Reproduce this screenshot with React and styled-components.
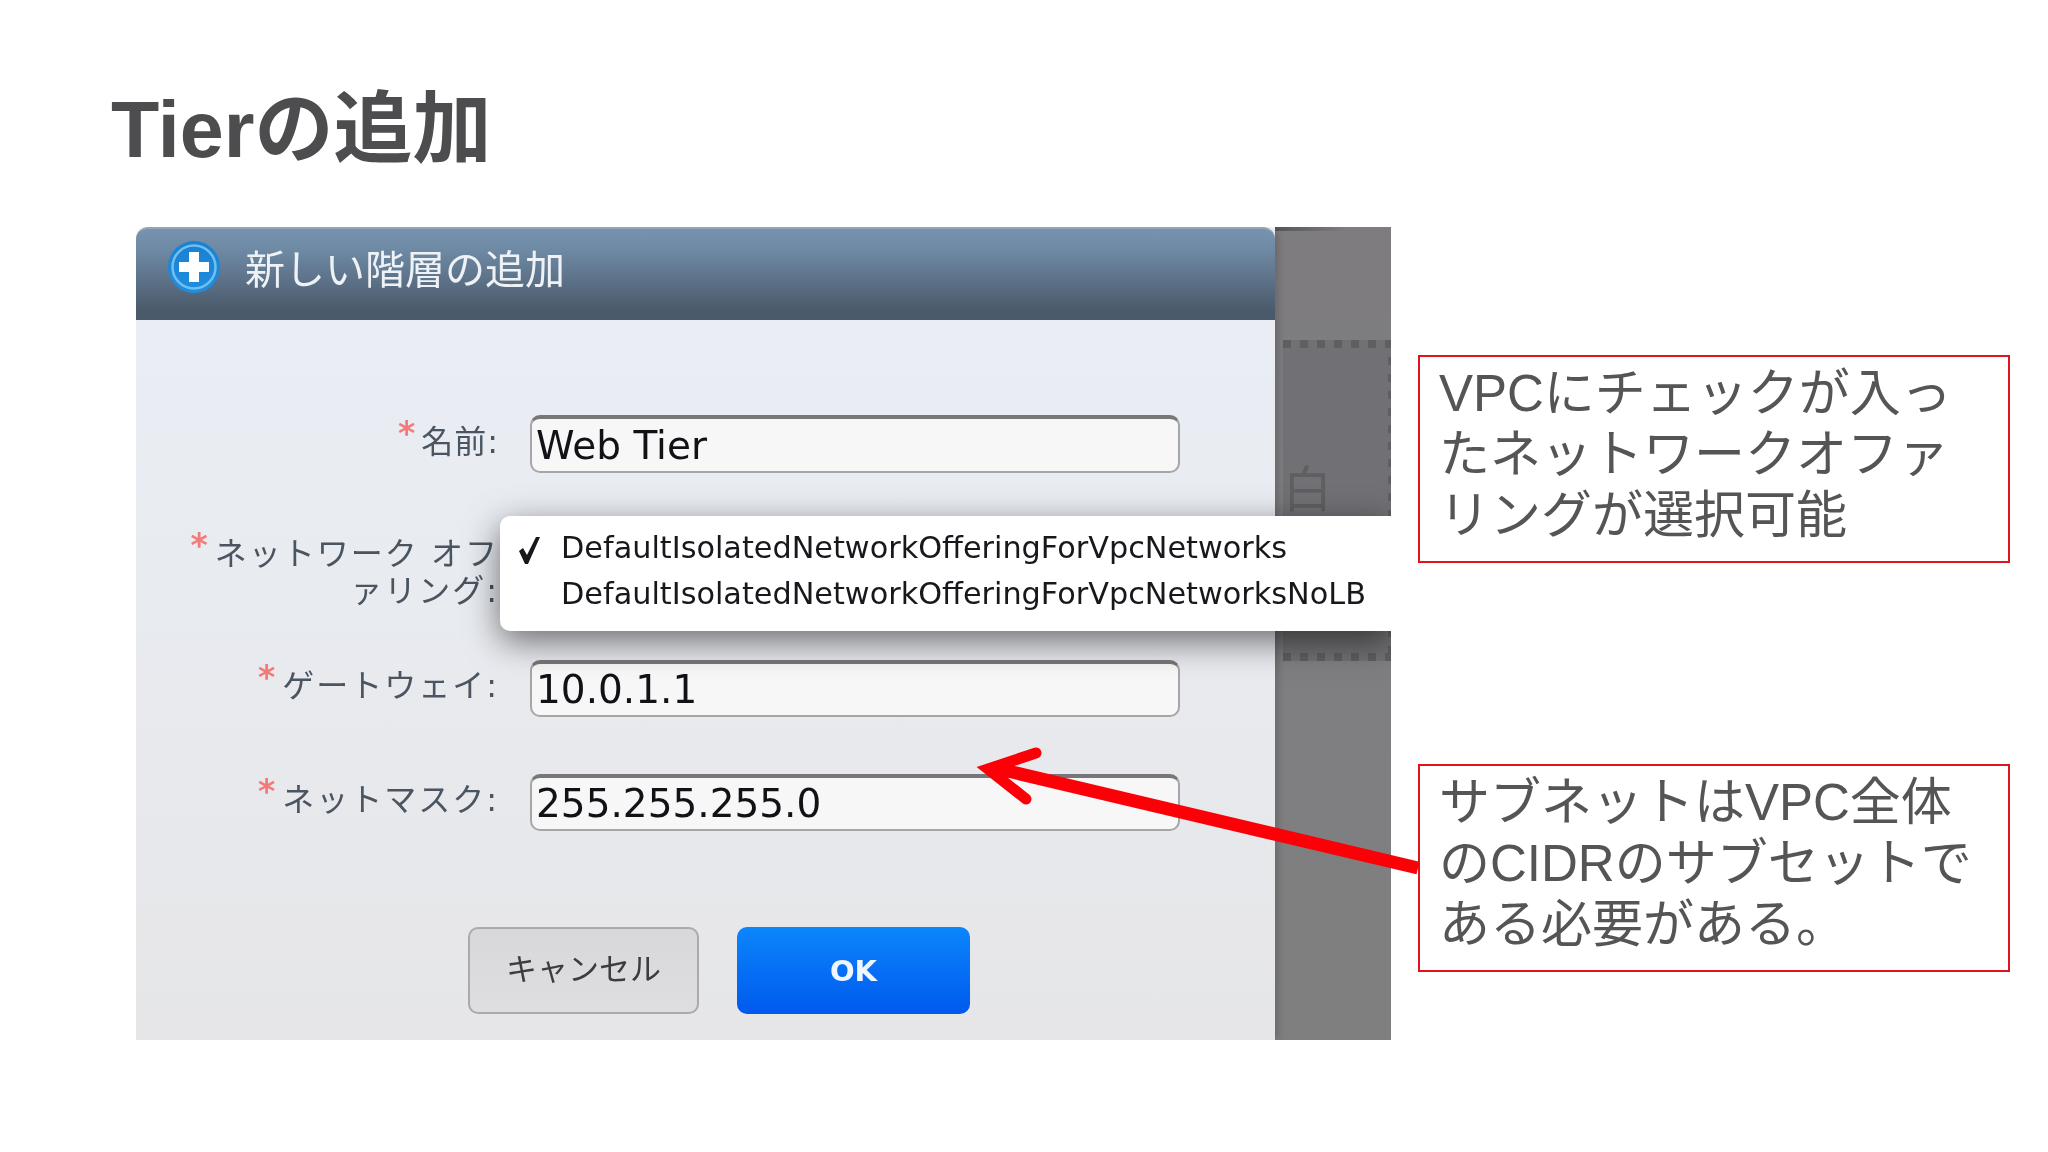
import React from "react";
import styled, { createGlobalStyle } from "styled-components";

const JP = `"Liberation Sans", "Noto Sans CJK JP", sans-serif`;
const UI = `"DejaVu Sans", "Noto Sans CJK JP", sans-serif`;

const GlobalStyle = createGlobalStyle`
  html, body {
    margin: 0;
    padding: 0;
    background: #ffffff;
  }
`;

const Slide = styled.div`
  position: relative;
  width: 2048px;
  height: 1152px;
  overflow: hidden;
  background: #ffffff;
  font-family: ${JP};
`;
const Title = styled.h1`
  margin: 0;
  padding: 82px 0 0 111px;
  height: 227px;
  box-sizing: border-box;
  font-size: 79px;
  line-height: 96px;
  font-weight: 700;
  color: #4d4d4f;
`;
const Content = styled.div`
  display: flex;
  gap: 27px;
  padding-left: 136px;
`;
const Screenshot = styled.div`
  position: relative;
  display: flex;
  width: 1255px;
  height: 813px;
  overflow: hidden;
  filter: blur(0.7px);
`;
const Dialog = styled.div`
  display: flex;
  flex-direction: column;
  width: 1139px;
  flex-shrink: 0;
  background: linear-gradient(#eaeff6, #e6e6e8);
  border-radius: 12px 12px 0 0;
  box-shadow: 4px 0 6px rgba(0, 0, 0, 0.15);
  z-index: 1;
`;
const DialogHeader = styled.div`
  display: flex;
  align-items: center;
  gap: 22px;
  height: 93px;
  padding: 0 0 15px 29px;
  box-sizing: border-box;
  border-radius: 12px 12px 0 0;
  background: linear-gradient(#7793b0, #6d88a3 25%, #4b5a6a 90%);
  border-top: 2px solid #94a5b3;
  font-family: ${UI};
  font-size: 40px;
  color: #eef2f6;
`;
const Form = styled.div`
  display: flex;
  flex-direction: column;
  padding-top: 95px;
`;
const Row = styled.div`
  display: grid;
  grid-template-columns: 363px 650px;
  grid-template-rows: 100%;
  column-gap: 31px;
  align-items: center;
  height: ${(props) => props.height}px;
  margin-top: ${(props) => props.top || 0}px;
`;
const Label = styled.div`
  padding-bottom: ${(props) => props.lift || 4}px;
  text-align: right;
  font-family: ${UI};
  font-size: 32px;
  line-height: 37px;
  color: #4a5561;
  letter-spacing: ${(props) => props.spacing || 0}px;
`;
const Star = styled.span`
  color: #f47a7a;
  font-size: 33px;
  line-height: 0;
  font-weight: 700;
  vertical-align: 8px;
  margin-right: 5px;
`;
const Field = styled.div`
  height: 100%;
  box-sizing: border-box;
  display: flex;
  align-items: center;
  padding-left: 4px;
  border: 2px solid #a6a6a8;
  border-top: 4px solid #77777a;
  border-radius: 10px;
  background: #f7f7f8;
  font-family: ${UI};
  font-size: 39px;
  color: #101216;
`;
const Buttons = styled.div`
  display: flex;
  gap: 38px;
  margin-top: 96px;
  padding-left: 332px;
`;
const CancelButton = styled.div`
  display: flex;
  align-items: center;
  justify-content: center;
  width: 231px;
  height: 87px;
  padding-bottom: 9px;
  box-sizing: border-box;
  border: 2px solid #aaaaac;
  border-radius: 10px;
  background: linear-gradient(#d8d8da, #dedee0);
  font-family: ${UI};
  font-size: 31px;
  color: #3c3c40;
`;
const OkButton = styled.div`
  display: flex;
  align-items: center;
  justify-content: center;
  width: 233px;
  height: 87px;
  box-sizing: border-box;
  border-radius: 10px;
  background: linear-gradient(#0c86fb, #0059ee);
  font-family: ${UI};
  font-size: 29px;
  font-weight: 700;
  color: #eef6ff;
`;
const Backdrop = styled.div`
  flex: 1;
  padding: 113px 0 0 8px;
  background:
    linear-gradient(90deg, #555557, transparent) top left / 70px 4px no-repeat,
    linear-gradient(#7e7c7f, #7f7f80);
`;
const DashedBox = styled.div`
  height: 321px;
  box-sizing: border-box;
  padding: 122px 0 0 0;
  background:
    repeating-linear-gradient(90deg, #5f5f62 0 8px, transparent 8px 17px) top / 100% 8px no-repeat,
    repeating-linear-gradient(90deg, #5f5f62 0 8px, transparent 8px 17px) bottom / 100% 8px no-repeat,
    repeating-linear-gradient(#5f5f62 0 8px, transparent 8px 17px) right / 3px 100% no-repeat,
    #717074;
  font-size: 49px;
  line-height: 56px;
  color: #5f5f62;
`;
const Menu = styled.div`
  position: absolute;
  left: 364px;
  top: 289px;
  right: 0;
  height: 115px;
  padding: 9px 0 0 61px;
  box-sizing: border-box;
  z-index: 2;
  background: #ffffff;
  border-radius: 10px 0 0 10px;
  box-shadow: 0 10px 34px rgba(0, 0, 0, 0.55);
`;
const MenuItem = styled.div`
  position: relative;
  height: 46px;
  font-family: ${UI};
  font-size: 30.3px;
  line-height: 46px;
  color: #16181c;
  white-space: nowrap;
`;
const Check = styled.svg`
  position: absolute;
  left: -45px;
  top: 10px;
`;
const Aside = styled.div`
  display: flex;
  flex-direction: column;
  width: 592px;
  padding-top: 128px;
`;
const Callout = styled.div`
  height: ${(props) => props.height}px;
  margin-top: ${(props) => props.top || 0}px;
  box-sizing: border-box;
  padding: 6px 10px 0 19px;
  border: 2px solid #e0141c;
  font-size: 51px;
  line-height: 61px;
  color: #555557;
  white-space: nowrap;
`;
const Arrow = styled.svg`
  position: absolute;
  left: 0;
  top: 0;
  pointer-events: none;
`;

const PlusIcon = () => (
  <svg width="58" height="58" viewBox="0 0 58 58">
    <defs>
      <linearGradient id="plusFill" x1="0" y1="0" x2="0" y2="1">
        <stop offset="0" stopColor="#1a80d0" />
        <stop offset="1" stopColor="#1f8ee0" />
      </linearGradient>
    </defs>
    <circle cx="29" cy="29" r="26" fill="url(#plusFill)" />
    <circle cx="29" cy="29" r="21.500" fill="none" stroke="#6fc0f0" strokeWidth="2.500" />
    <path d="M24 14h10v10h10v10H34v10H24V34H14V24h10z" fill="#ffffff" />
  </svg>
);

export default function App() {
  return (
    <Slide>
      <GlobalStyle />
      <Title>Tierの追加</Title>
      <Content>
        <Screenshot>
          <Dialog>
            <DialogHeader>
              <PlusIcon />
              新しい階層の追加
            </DialogHeader>
            <Form>
              <Row height={58}>
                <Label spacing={1}>
                  <Star>*</Star>
                  名前:
                </Label>
                <Field>Web Tier</Field>
              </Row>
              <Row height={157} top={30}>
                <Label spacing={2} lift={18}>
                  <Star>*</Star>
                  ネットワーク オフ
                  <br />
                  ァリング:
                </Label>
              </Row>
              <Row height={57}>
                <Label spacing={2}>
                  <Star>*</Star>
                  ゲートウェイ:
                </Label>
                <Field>10.0.1.1</Field>
              </Row>
              <Row height={57} top={57}>
                <Label spacing={2}>
                  <Star>*</Star>
                  ネットマスク:
                </Label>
                <Field>255.255.255.0</Field>
              </Row>
              <Buttons>
                <CancelButton>キャンセル</CancelButton>
                <OkButton>OK</OkButton>
              </Buttons>
            </Form>
          </Dialog>
          <Backdrop>
            <DashedBox>白</DashedBox>
          </Backdrop>
          <Menu>
            <MenuItem>
              <Check width="26" height="30" viewBox="0 0 26 30">
                <path d="M3 16l4-3 4 7L20 2h4L12 29H9z" fill="#16181c" />
              </Check>
              DefaultIsolatedNetworkOfferingForVpcNetworks
            </MenuItem>
            <MenuItem>DefaultIsolatedNetworkOfferingForVpcNetworksNoLB</MenuItem>
          </Menu>
        </Screenshot>
        <Aside>
          <Callout height={208}>
            VPCにチェックが入っ
            <br />
            たネットワークオファ
            <br />
            リングが選択可能
          </Callout>
          <Callout height={208} top={201}>
            サブネットはVPC全体
            <br />
            のCIDRのサブセットで
            <br />
            ある必要がある。
          </Callout>
        </Aside>
      </Content>
      <Arrow width="2048" height="1152" viewBox="0 0 2048 1152">
        <path d="M1418 868L995 768" stroke="#fb0007" strokeWidth="13" fill="none" />
        <path
          d="M1036 753L988 769L1026 799"
          stroke="#fb0007"
          strokeWidth="11"
          strokeLinecap="round"
          strokeLinejoin="miter"
          fill="none"
        />
      </Arrow>
    </Slide>
  );
}
